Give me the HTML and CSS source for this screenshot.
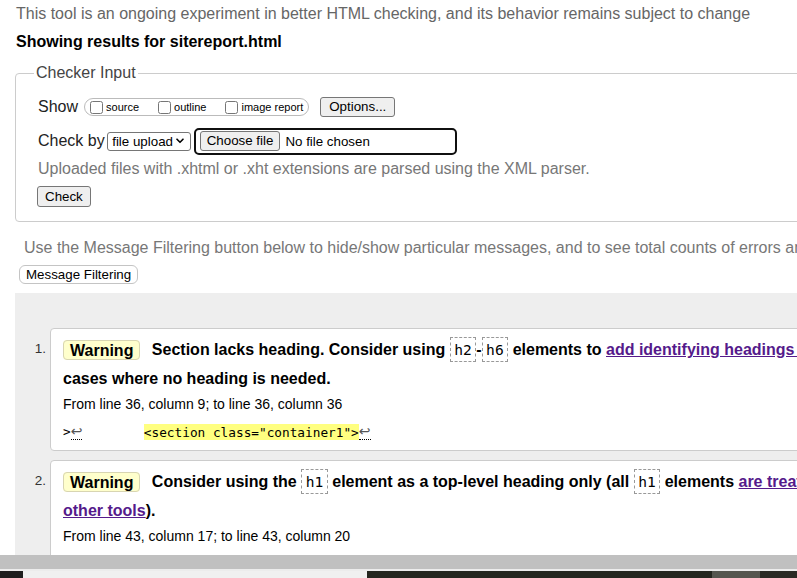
FILE: index.html
```html
<!DOCTYPE html>
<html lang="en">
<head>
<meta charset="utf-8">
<title>Showing results for sitereport.html - Nu Html Checker</title>
<link rel="stylesheet" href="styles.css">
</head>
<body>
<div class="screen">
  <div class="page">
    <p class="intro">This tool is an ongoing experiment in better HTML checking, and its behavior remains subject to change</p>
    <h2 class="results-for">Showing results for sitereport.html</h2>
    <form class="checker">
      <fieldset class="checker-input">
        <legend>Checker Input</legend>
        <div class="row show-row">
          <span class="row-label">Show</span>
          <span class="opts">
            <label class="opt"><input type="checkbox">source</label>
            <label class="opt"><input type="checkbox">outline</label>
            <label class="opt"><input type="checkbox">image report</label>
          </span>
          <button type="button" class="btn options">Options...</button>
        </div>
        <div class="row by-row">
          <span class="row-label">Check by</span>
          <span class="select-wrap">
            <select class="by-select"><option>file upload</option></select>
            <svg class="chev" width="8" height="6" viewBox="0 0 8 6" aria-hidden="true"><path d="M1 1.2 L4 4.3 L7 1.2" fill="none" stroke="#000" stroke-width="1.6" stroke-linecap="round" stroke-linejoin="round"/></svg>
          </span>
          <span class="file-input">
            <span class="btn choose">Choose file</span>
            <span class="file-status">No file chosen</span>
          </span>
        </div>
        <p class="hint">Uploaded files with .xhtml or .xht extensions are parsed using the XML parser.</p>
        <button type="button" class="btn check">Check</button>
      </fieldset>
    </form>
    <p class="filter-note">Use the Message Filtering button below to hide/show particular messages, and to see total counts of errors and warnings.</p>
    <button type="button" class="filter-btn">Message Filtering</button>
    <div class="results">
      <ol class="messages">
        <li class="msg">
          <span class="num">1.</span>
          <div class="card">
            <p class="message"><strong class="badge">Warning</strong> <span>Section lacks heading. Consider using <code>h2</code>-<code>h6</code> elements to <a href="#">add identifying headings to all sections</a>, or else use a <code>div</code> element instead for any cases where no heading is needed.</span></p>
            <p class="location">From line 36, column 9; to line 36, column 36</p>
            <code class="extract">&gt;<b class="lf" title="Line break">↩</b>        <mark>&lt;section class="container1"&gt;</mark><b class="lf" title="Line break">↩</b></code>
          </div>
        </li>
        <li class="msg">
          <span class="num">2.</span>
          <div class="card">
            <p class="message"><strong class="badge">Warning</strong> <span>Consider using the <code>h1</code> element as a top-level heading only (all <code>h1</code> elements <a href="#">are treated as top-level headings by many screen readers and other tools</a>).</span></p>
            <p class="location">From line 43, column 17; to line 43, column 20</p>
            <code class="extract">            <mark>&lt;h1&gt;</mark></code>
          </div>
        </li>
      </ol>
    </div>
  </div>
</div>
<div class="hscroll"></div>
<div class="hscroll-edge"></div>
<div class="taskbar">
  <span class="tb tb-start"></span>
  <span class="tb tb-search"></span>
  <span class="tb tb-apps"></span>
  <span class="tb tb-active"></span>
  <span class="tb tb-tray"></span>
</div>
</body>
</html>
```

FILE: styles.css
```css
html, body {
  margin: 0;
  padding: 0;
}

body {
  width: 797px;
  height: 578px;
  overflow: hidden;
  background: #fff;
  color: #000;
  font-family: "Liberation Sans", Arial, sans-serif;
}

.screen {
  height: 555px;
  overflow: hidden;
}

.page {
  width: 1243px;
  padding-left: 15px;
}

.intro {
  margin: 0;
  padding: 4px 0 0 1px;
  font-size: 16px;
  line-height: 20px;
  color: #666;
  white-space: nowrap;
}

.results-for {
  margin: 8px 0 0 1px;
  font-size: 16px;
  line-height: 20px;
  font-weight: bold;
  color: #000;
}

.checker {
  margin: 12px 0 0;
}

.checker-input {
  margin: 0;
  padding: 13px 22px 14px;
  border: 1px solid #ccc;
  border-radius: 4px;
  min-width: 0;
}

.checker-input legend {
  padding: 0 2px;
  margin-left: -4px;
  font-size: 16px;
  line-height: 18px;
  color: #444;
}

.row {
  display: flex;
  align-items: center;
}

.show-row {
  height: 24px;
}

.by-row {
  height: 28px;
  margin-top: 8px;
}

.row-label {
  font-size: 16px;
  line-height: 18px;
  color: #222;
}

.opts {
  display: inline-flex;
  align-items: center;
  height: 18px;
  box-sizing: border-box;
  margin-left: 6px;
  padding: 0 5px 0 1px;
  border: 1px solid #bbb;
  border-radius: 9px;
}

.opt {
  display: flex;
  align-items: center;
  font-size: 11px;
  line-height: 13px;
  color: #000;
  margin-right: 15px;
}

.opt:last-child {
  margin-right: 0;
}

.opt input {
  margin: 0 3px 0 4px;
  width: 13px;
  height: 13px;
}

.btn {
  display: inline-flex;
  align-items: center;
  box-sizing: border-box;
  height: 20px;
  padding: 0 7px;
  font-family: "Liberation Sans", Arial, sans-serif;
  font-size: 13.33px;
  line-height: 16px;
  color: #000;
  background: #efefef;
  border: 1px solid #767676;
  border-radius: 3px;
}

.options {
  margin-left: 11px;
  padding: 0 8px;
}

.select-wrap {
  position: relative;
  display: inline-flex;
  margin-left: 2.5px;
}

.by-select {
  appearance: none;
  -webkit-appearance: none;
  box-sizing: border-box;
  width: 84px;
  height: 19px;
  margin: 0;
  padding: 0 16px 0 4px;
  font-family: "Liberation Sans", Arial, sans-serif;
  font-size: 13.33px;
  color: #000;
  background: #fff;
  border: 1px solid #767676;
  border-radius: 3px;
}

.chev {
  position: absolute;
  right: 7px;
  top: 6.5px;
  pointer-events: none;
}

.file-input {
  display: inline-flex;
  align-items: center;
  box-sizing: border-box;
  width: 263.5px;
  height: 27px;
  margin-left: 2.5px;
  padding: 0 4px;
  border: 2px solid #101010;
  border-radius: 5px;
}

.choose {
  padding: 0 6px;
}

.file-status {
  margin-left: 5px;
  font-size: 13.33px;
  color: #000;
}

.hint {
  margin: 4px 0 0;
  font-size: 16px;
  line-height: 20px;
  color: #777;
}

.check {
  display: flex;
  height: 21px;
  margin-top: 7px;
  margin-left: -1px;
  padding: 0 7px;
}

.filter-note {
  margin: 16px 0 0 9px;
  font-size: 16px;
  line-height: 20px;
  color: #777;
  white-space: nowrap;
}

.filter-btn {
  display: block;
  box-sizing: border-box;
  height: 19px;
  margin: 7px 0 0 4px;
  padding: 0 6px;
  font-family: "Liberation Sans", Arial, sans-serif;
  font-size: 13.33px;
  line-height: 16px;
  color: #000;
  background: #fff;
  border: 1px solid #c4c4c4;
  border-radius: 6px;
}

.results {
  margin-top: 9px;
  padding: 35px 0 30px;
  background: #eee;
}

.messages {
  list-style: none;
  margin: 0;
  padding: 0;
}

.msg {
  display: flex;
  align-items: flex-start;
}

.msg + .msg {
  margin-top: 9px;
}

.num {
  flex: 0 0 35px;
  box-sizing: border-box;
  padding: 13px 4px 0 0;
  text-align: right;
  font-size: 13.5px;
  line-height: 16px;
  color: #333;
}

.card {
  flex: 1;
  min-width: 0;
  padding: 6px 12px 8px;
  background: #fff;
  border: 1px solid #ccc;
  border-radius: 4px;
}

.message {
  margin: 0;
  font-size: 16px;
  line-height: 29px;
  font-weight: bold;
  color: #000;
}

.badge {
  padding: 0.5px 6px;
  margin-right: 7px;
  background: #ffffcc;
  border: 1px solid #d8d5b2;
  border-radius: 4px;
}

.message code {
  padding: 3px 3.5px;
  font-family: "DejaVu Sans Mono", "Liberation Mono", monospace;
  font-size: 14.6px;
  font-weight: normal;
  border: 1px dashed #999;
}

.message a {
  color: #551a8b;
  text-decoration: underline;
}

.location {
  margin: 2px 0 0;
  font-size: 14px;
  line-height: 18px;
  color: #000;
}

.extract {
  display: block;
  margin-top: 9px;
  font-family: "DejaVu Sans Mono", "Liberation Mono", monospace;
  font-size: 12.75px;
  line-height: 20px;
  white-space: pre;
  color: #000;
}

.extract mark {
  padding: 0.5px 0;
  background: #ffff80;
  color: #000;
}

.lf {
  font-family: "DejaVu Sans", sans-serif;
  font-size: 14px;
  font-weight: normal;
  line-height: 1;
  color: #555;
  border-bottom: 1px dotted #000;
}

.hscroll {
  height: 14px;
  background: #c0c0c0;
}

.hscroll-edge {
  height: 2px;
  background: #ececec;
}

.taskbar {
  display: flex;
  height: 7px;
}

.tb {
  display: block;
  height: 100%;
}

.tb-start {
  width: 23px;
  background: #1e1e1e;
}

.tb-search {
  width: 344px;
  background: #f0f0f0;
}

.tb-apps {
  width: 345px;
  background: #24261f;
}

.tb-active {
  width: 48px;
  background: #55564f;
}

.tb-tray {
  flex: 1;
  background: #2a2a24;
}
```
